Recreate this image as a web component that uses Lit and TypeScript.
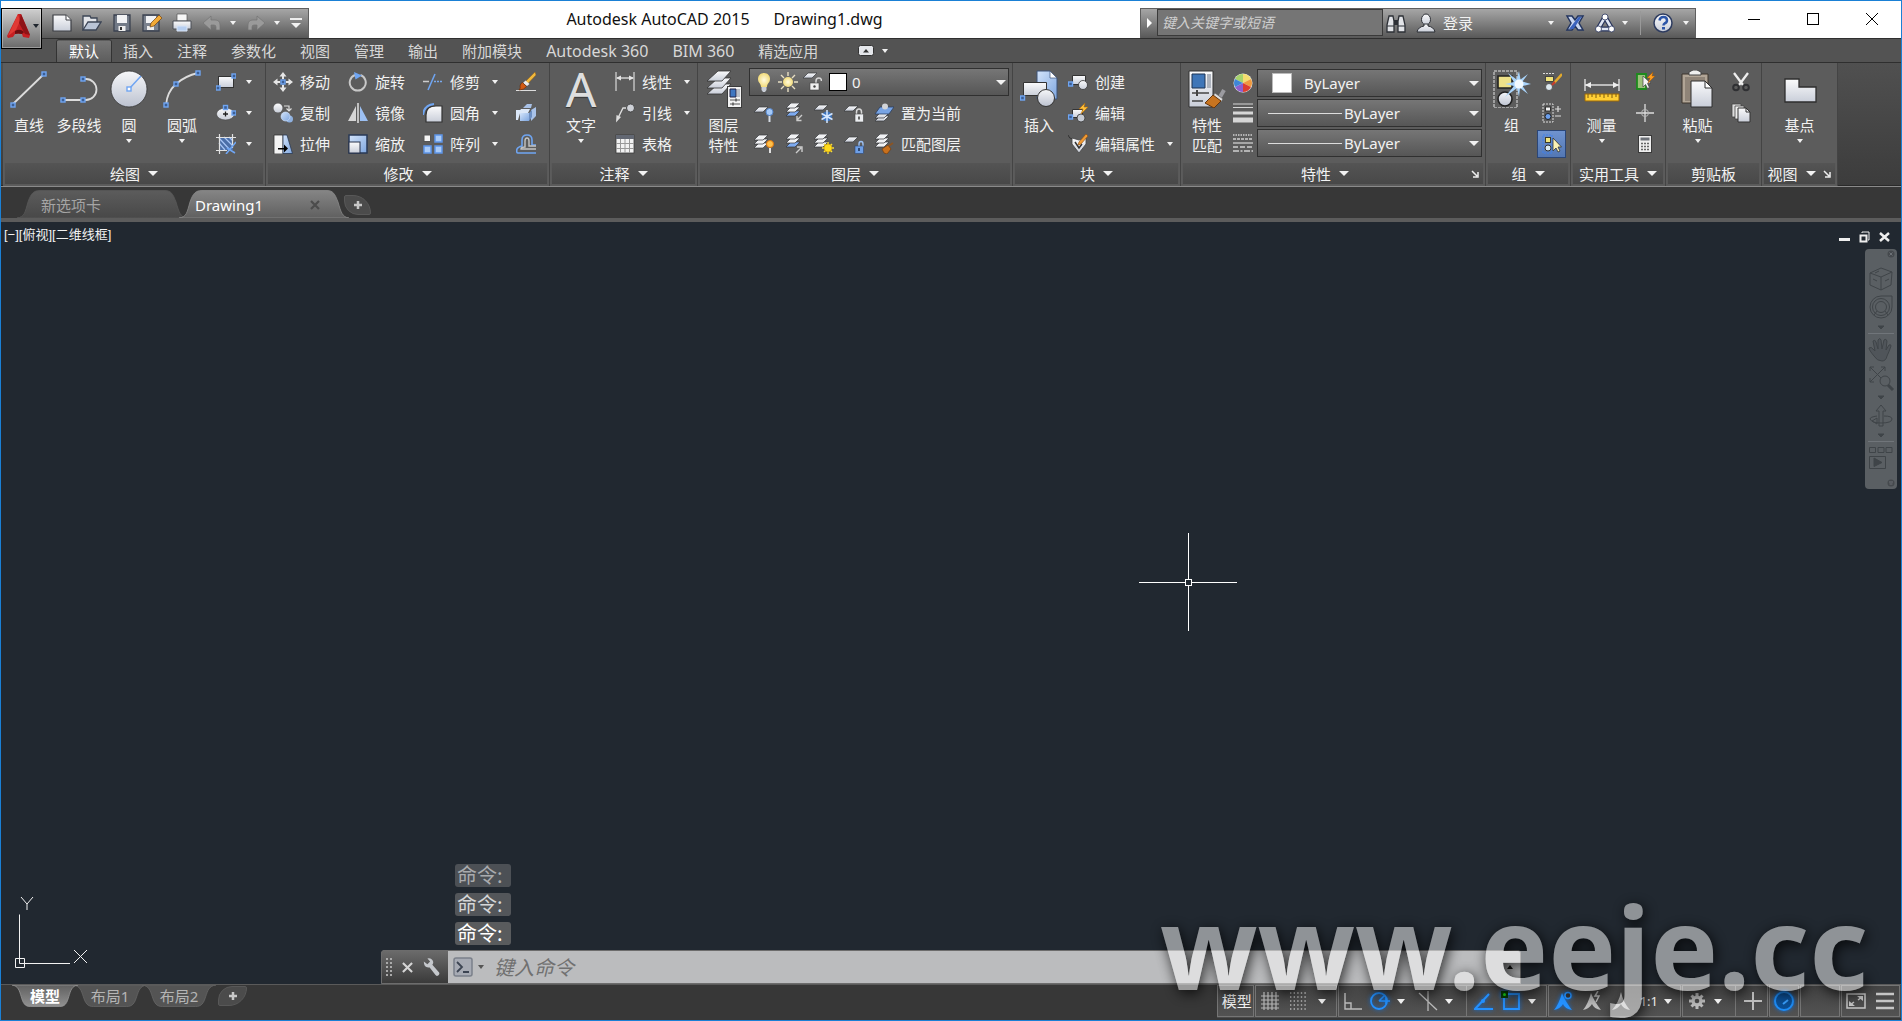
import { LitElement, html, svg, css, nothing } from "lit";
import { customElement, state } from "lit/decorators.js";
import { classMap } from "lit/directives/class-map.js";

const BLUE = "#6fa5f2";

/* A square grip, centred on (x, y). */
const grip = (x: number, y: number) =>
  svg`<rect x=${x - 2} y=${y - 2} width="4" height="4" fill="#3d5f94" stroke=${BLUE} stroke-width="1.4"/>`;

/* A single sheet of the layer stack, its top-left corner at (x, y). */
const sheet = (x: number, y: number, fill = "url(#paper)") =>
  svg`<path d="M${x + 5} ${y}H${x + 14}L${x + 9} ${y + 5}H${x}Z" fill=${fill} stroke="#33363b" stroke-width=".7"/>`;

const stack = (x: number, y: number, a = "#f1f2f4", b = "#f1f2f4", c = "#f1f2f4") =>
  svg`${sheet(x, y + 8, c)}${sheet(x, y + 4, b)}${sheet(x, y, a)}`;

const bigSheet = (y: number) =>
  svg`<path d="M13 ${y}H26L17 ${y + 10}H2Z" fill="url(#paper)" stroke="#333" stroke-width=".8"/>`;

const SMALL: Record<string, unknown> = {
  rect: svg`<rect x="2.5" y="4.5" width="15" height="11" fill="url(#paper)" stroke="#333"/>${grip(18, 4)}${grip(2, 16)}`,
  ellipse: svg`<ellipse cx="9.500" cy="11" rx="9" ry="6" fill="url(#paper)" stroke="#444" stroke-width=".6"/><path d="M9.500 8.500v5M7 11h5" stroke="#222" stroke-width="1.300"/>${grip(9.5, 4.5)}${grip(18, 10)}`,
  hatch: svg`<rect x="3" y="3" width="14" height="13" fill="#4b6fa8"/><path d="M3 9l6 7M3 4l11 12M8 3l9 9M13 3l4 4" stroke="#a8c6f5" stroke-width="1.200"/><path d="M3.500 0v20M16.500 0v14M0 3.500h20M0 16.500h11" stroke="#e2e2e2" stroke-width="1.200"/><path d="M20 8L10 20M11 14l8 5" stroke=${BLUE} stroke-width="1.600"/>`,
  move: svg`<path d="M10 0l3.500 4.500H11V7H9V4.500H6.500zM10 20l3.500-4.500H11V13H9v2.500H6.500zM0 10l4.500-3.500V9H7v2H4.500v2.500zM20 10l-4.500-3.500V9H13v2h2.500v2.500z" fill="#e6e6e6"/><rect x="8" y="8" width="4" height="4" fill="#3d5f94" stroke=${BLUE} stroke-width="1.400"/>`,
  copy: svg`<circle cx="5" cy="5" r="4.500" fill="url(#paper)"/><path d="M11 3h5v4M13.500 5.500L16 8l2.500-2.500" fill="none" stroke="#ddd" stroke-width="1.200"/><circle cx="16.500" cy="16" r="3.500" fill="#8fb1e0"/><circle cx="12.500" cy="13.500" r="4.500" fill="url(#sky)" stroke="#d4e4fb" stroke-width=".6"/>`,
  stretch: svg`<path d="M1 1h9v19H1z" fill="#f4f4f4" stroke="#333" stroke-width=".8"/><path d="M10 1h4l5.500 18.500H10z" fill="url(#sky)" stroke="#2a3850" stroke-width=".8"/><path d="M5 14h6v-3.500l4 4-4 4V15.500H5z" fill="#000"/>`,
  rotate: svg`<path d="M12.500 3A8 8 0 1 1 7 3" fill="none" stroke="#c8c8c8" stroke-width="2"/><path d="M6 0l8 3.500-6.500 4z" fill=${BLUE}/>`,
  mirror: svg`<path d="M8 3v15H0z" fill="#d6d6d6"/><path d="M12 3v15h8z" fill="#9cc0f3"/><path d="M10 0v20" stroke="#e2e2e2" stroke-width="1.500"/>`,
  scale: svg`<rect x="1" y="1" width="18" height="18" fill="url(#sky)" stroke="#293955" stroke-width="1.500"/><rect x="1" y="8" width="11" height="11" fill="url(#paper)" stroke="#29334a"/>`,
  trim: svg`<path d="M0 9.500h6" stroke="#ccc" stroke-width="1.500"/><path d="M5 18L12 2" stroke=${BLUE} stroke-width="1.500"/><path d="M11 9.500h9" stroke="#79a9ec" stroke-width="1.500" stroke-dasharray="2 1"/>`,
  fillet: svg`<path d="M3 19V12Q3 3 13 3h6v16z" fill="url(#paper)" stroke="#333" stroke-width="1.200"/><path d="M0 12Q1 2 11 1" fill="none" stroke=${BLUE} stroke-width="2"/>`,
  array: svg`<rect x="1" y="1" width="6.500" height="6.500" fill="#f4f4f4" stroke="#555"/><path d="M12 1h7v7h-7zM1 12h7v7H1zM12 12h7v7h-7z" fill="#a9cbf8" stroke="#5e95e8" stroke-width="1.500"/>`,
  erase: svg`<path d="M0 18.500h20" stroke="#ddd"/><path d="M19 0L9 10l2.500 2L20 3z" fill="#f0b83c" stroke="#96641a" stroke-width=".5"/><path d="M9.500 8.500l4 3.500-2.500 2-4-3z" fill="#e9e9e9"/><path d="M6.500 10.500l4 4Q8 18 3 18q2-2 1-4 .5-3 2.500-3.500z" fill="#d15a12" stroke="#632705" stroke-width=".6"/>`,
  box: svg`<path d="M7 5l4-4h5l-1 4zM15 7l5-3v9l-5 5z" fill="#a9c2e8"/><path d="M2 10l3-4h9l-2 4zM0 7h5l-3 10H0z" fill="#dbe7f8"/><path d="M4 10h9v8H4z" fill="url(#sky)"/><path d="M13 10l3-3v7l-3 4z" fill="#6d8fc2"/>`,
  offset: svg`<path d="M20 19H2Q0 19 1 15q1-2 5-3V6q0-5 5-5t5 5v5h4" fill="none" stroke=${BLUE} stroke-width="1.600"/><path d="M20 15H5q0-2 4-2V7q0-3 2-3t2 3v5h7" fill="none" stroke="#c4c4c4" stroke-width="1.400"/>`,
  linear: svg`<path d="M1 0v19M19 0v19M2 6h16" stroke="#cfcfcf" stroke-width="1.300"/><path d="M1 6l5-2.500v5zM19 6l-5-2.500v5z" fill="#e4e4e4"/>`,
  leader: svg`<circle cx="15.500" cy="5" r="4" fill="#cfd2d8" stroke="#333" stroke-width=".8"/><path d="M11 5H8L3 15" fill="none" stroke="#ddd" stroke-width="1.400"/><path d="M1 19.500L1.500 12 6 14z" fill="#ddd"/>`,
  table: svg`<rect x="1" y="1" width="18" height="18" fill="#f2f2f2" stroke="#3a3a3a" stroke-width=".8"/><path d="M1 1h18v4H1z" fill="#636873"/><path d="M1 9.500h18M1 14.500h18M5.500 5v14M10 5v14M14.500 5v14" stroke="#999"/>`,
  bulb: svg`<path d="M10 1c4 0 6 3 6 6 0 4-3 4-3 8H7c0-4-3-4-3-8 0-3 2-6 6-6z" fill="url(#bulb)"/><path d="M7.500 15h5v3l-1.500 2H9l-1.500-2z" fill="#c9ced6"/>`,
  sun: svg`<g stroke="#e8dfc4" stroke-width="1.400"><path d="M10 0v4M10 16v4M0 10h4M16 10h4M3 3l3 3M14 14l3 3M17 3l-3 3M6 14l-3 3"/></g><circle cx="10" cy="10" r="5" fill="url(#bulb)"/>`,
  unlock: svg`${sheet(1, 1)}<path d="M14 11V9q0-3 3-3 2.500 0 2.500 3" fill="none" stroke="#d8d8d8" stroke-width="1.500"/><rect x="8" y="11" width="9" height="7" fill="#f0f0f0" stroke="#444" stroke-width=".6"/><circle cx="12.500" cy="14.500" r="1.200" fill="#444"/>`,
  layOff: svg`${sheet(0, 4)}<circle cx="15.500" cy="9" r="3.500" fill="#a5c9f7" stroke="#5788ce"/><path d="M14.500 13h2v6h-2z" fill="#d5dbe4"/>`,
  layIso: svg`${stack(2, 0, "#f1f2f4", "#f1f2f4", "#7daaf0")}<path d="M18 12l-5 5m0-4v4.500h4.500" fill="none" stroke="#ccc" stroke-width="1.400"/>`,
  layFreeze: svg`${sheet(0, 2)}<circle cx="13" cy="13.500" r="5" fill="#3f75bd"/><g stroke="#d5e7ff" stroke-width="1.500"><path d="M13 7v13M7.500 10.500l11 6M18.500 10.500l-11 6"/></g>`,
  layLock: svg`${sheet(0, 3)}<path d="M12.500 12V9q0-3 2.500-3t2.500 3v3" fill="none" stroke="#d8d8d8" stroke-width="1.500"/><rect x="11" y="11" width="8.500" height="8" fill="#eceef1" stroke="#444" stroke-width=".6"/><path d="M15 13.500v3" stroke="#444" stroke-width="1.600"/>`,
  layCurrent: svg`${sheet(1, 13)}${sheet(1, 10)}<path d="M6 4h14l-5 7H1z" fill="#78a4e4" stroke="#2a3e60" stroke-width=".8"/><circle cx="11" cy="3.500" r="3" fill="#d2d4d8"/>`,
  layOn: svg`${stack(0, 1)}<circle cx="16" cy="10" r="3.500" fill="#ffc04a" stroke="#e0770b"/><path d="M15 14h2v5h-2z" fill="#e0e0e0"/>`,
  layUniso: svg`${stack(2, 0, "#f1f2f4", "#f1f2f4", "#7daaf0")}<path d="M12 19l5-5m-4-1h5v5" fill="none" stroke="#ccc" stroke-width="1.400"/>`,
  layThaw: svg`${stack(0, 0)}<g stroke="#f0dd45" stroke-width="1.500"><path d="M14 8v12M8 14h12M10 10l8 8M18 10l-8 8"/></g><circle cx="14" cy="14" r="4" fill="#ffdc1e" stroke="#c79300" stroke-width=".6"/>`,
  layUnlock: svg`${sheet(0, 3)}<path d="M15 13v-3q0-2.500 2-2.500t2 2.500v3" fill="none" stroke="#9cc0f3" stroke-width="1.400"/><rect x="11" y="12" width="8.500" height="7.500" fill="#6e9fe6" stroke="#2c4775" stroke-width=".6"/><path d="M15 14v3" stroke="#1d2f4f" stroke-width="1.500"/>`,
  layMatch: svg`${stack(1, 0)}<path d="M8 15l6-4 3 4-4 5-3-1z" fill="#c8701c" stroke="#6e3606" stroke-width=".6"/><path d="M14.500 12l4.500-3" stroke="#8a5424" stroke-width="2"/>`,
  blkCreate: svg`<path d="M4.500 3.500h13v9h-13z" fill="url(#paper)" stroke="#333"/><circle cx="15" cy="13" r="4.500" fill="url(#paper)" stroke="#333" stroke-width=".8"/>${grip(2.5, 12)}`,
  blkEdit: svg`<path d="M4.500 6.500h10v8h-10z" fill="url(#paper)" stroke="#333"/><circle cx="13" cy="15" r="4" fill="#c5cad3" stroke="#333" stroke-width=".8"/>${grip(2.5, 14)}<path d="M17 0l-6 6h4l-2 5 7-7h-4z" fill="#ffc23c" stroke="#b26a08" stroke-width=".6"/>`,
  blkAttr: svg`<path d="M0 1Q1 5 5 5" fill="none" stroke="#333"/><path d="M4 4l7 2 7-2v6l-7 9-7-9z" fill="url(#paper)" stroke="#444" stroke-width=".8"/><path d="M7 8l4 6 3-4" fill="none" stroke="#333" stroke-width="1.500"/><path d="M18 0l2 2-7 8-3 1 1-3z" fill="#ef9a35" stroke="#8f4e0c" stroke-width=".6"/>`,
  wheel: svg`<circle cx="10" cy="10" r="9.500" fill="#eee"/><path d="M10 10L2 6A9 9 0 0 1 10 1z" fill="#a6d36c"/><path d="M10 10V1a9 9 0 0 1 8 5z" fill="#f4dd6f"/><path d="M10 10l8-4a9 9 0 0 1 0 8z" fill="#f09a3e"/><path d="M10 10l8 4a9 9 0 0 1-8 5z" fill="#dc3e30"/><path d="M10 10v9a9 9 0 0 1-8-5z" fill="#8d5fd0"/><path d="M10 10l-8 4a9 9 0 0 1 0-8z" fill="#3f86d8"/>`,
  weights: svg`<path d="M0 1h20M0 4.500h20" stroke="#d6d6d6"/><path d="M0 10h20" stroke="#d6d6d6" stroke-width="3"/><path d="M0 17h20" stroke="#d6d6d6" stroke-width="5"/>`,
  types: svg`<g stroke="#d0d0d0" stroke-width="1.300"><path d="M0 2h20" stroke-dasharray="1.500 1"/><path d="M0 6h20" stroke-dasharray="3 1"/><path d="M0 10h20"/><path d="M0 14h20" stroke-dasharray="5 2"/><path d="M0 18h20" stroke-dasharray="6 1.500 2 1.500"/></g>`,
  grpEdit: svg`<path d="M1 1.500h12" stroke="#ddd" stroke-dasharray="2 1"/><rect x="3.500" y="4.500" width="8" height="5" fill="#efe27a" stroke="#444"/><circle cx="7" cy="15" r="3.500" fill="#dde8ef" stroke="#444" stroke-width=".8"/><path d="M20 2l-8 9" stroke="#e2a92c" stroke-width="2.500"/><path d="M13 10l-3 3" stroke="#c83a2c" stroke-width="2"/>`,
  grpUn: svg`<rect x="1" y="1" width="10" height="18" fill="none" stroke="#ddd" stroke-dasharray="2 1"/><rect x="3.500" y="4" width="5" height="4" fill="#f2f2f2" stroke="#333"/><circle cx="6" cy="13.500" r="3" fill="#6c9fec" stroke="#222"/><path d="M13 6h6M16 3v6M13 13h6" stroke="#ddd" stroke-width="1.200"/>`,
  grpSel: svg`<rect x="1" y="1" width="9" height="18" fill="none" stroke="#3f80ec" stroke-dasharray="2 1"/><rect x="3.500" y="3.500" width="5" height="5" fill="#f0e57f" stroke="#3a3a2a"/><circle cx="6" cy="14" r="3" fill="#d8e9f2" stroke="#333"/><path d="M11 4v13l3-3 2 4 2-1-2-4h3.500z" fill="#fbf3b5" stroke="#333" stroke-width=".8"/>`,
  quick: svg`<path d="M2 2h9v15H2z" fill="#9cc17a" stroke="#1d8a1d" stroke-width="1.800"/><path d="M8 4v11l2.500-2.500 2 4 2-1-2-4H16z" fill="#f4f4f4" stroke="#444" stroke-width=".7"/><path d="M18 0l-6 6h3l-2 5 7-7h-3z" fill="#ff9d1e" stroke="#9f5405" stroke-width=".5"/>`,
  point: svg`<path d="M10 1v18M1 10h18" stroke="#ddd" stroke-width="1.300"/><circle cx="10" cy="10" r="3.500" fill="none" stroke="#bbb"/>`,
  calc: svg`<rect x="3.500" y="1.500" width="13" height="17" fill="#eee" stroke="#3a3a3a"/><path d="M5.500 3.500h9v3h-9z" fill="#6c7077"/><path d="M6 9.500h9M6 12.500h9M6 15.500h9" stroke="#666" stroke-width="1.500" stroke-dasharray="2 1"/>`,
  cut: svg`<path d="M3 1l9 12M17 1L8 13" stroke="#eee" stroke-width="2.300"/><circle cx="5" cy="15.500" r="2.800" fill="none" stroke="#2f3033" stroke-width="2"/><circle cx="15" cy="15.500" r="2.800" fill="none" stroke="#2f3033" stroke-width="2"/>`,
  dup: svg`<path d="M1 1h9v13H1z" fill="#ddd" stroke="#444" stroke-width=".8"/><path d="M4 3h9v13H4z" fill="#eee" stroke="#444" stroke-width=".8"/><path d="M7 5h8l4 4v10H7z" fill="url(#paper)" stroke="#333"/><path d="M15 5v4h4" fill="none" stroke="#333"/>`,
  qNew: svg`<path d="M1 2h13l5 5v11H1z" fill="url(#paper)" stroke="#3c3f45" stroke-width="1.200"/><path d="M14 2v5h5" fill="#fff" stroke="#3c3f45"/>`,
  qOpen: svg`<path d="M1 17V3h7l1 2h6v4" fill="#e3e5e9" stroke="#3c4556" stroke-width="1.300"/><path d="M1 17l5-8h13l-5 8z" fill="#b9c4d6" stroke="#3c4556" stroke-width="1.300"/>`,
  qSave: svg`<path d="M2 2h16v16H2z" fill="#727a87" stroke="#3b4250" stroke-width="1.300"/><path d="M5 2h10v8H5z" fill="#f1f2f4"/><path d="M6.500 13h7v5h-7z" fill="#eee"/><path d="M8 14h2v3H8z" fill="#333"/>`,
  qSaveAs: svg`<path d="M1 2h16v16H1z" fill="#7b828e" stroke="#3b4250" stroke-width="1.300"/><path d="M4 3h10v7H4z" fill="#f1f2f4"/><path d="M5 13h7v4H5z" fill="#eee"/><path d="M17 2l3 3-8 8-4 1 1-4z" fill="#f2aa37" stroke="#704214" stroke-width=".7"/>`,
  qPrint: svg`<path d="M5 1h10v7H5z" fill="#f7f7f7" stroke="#555" stroke-width=".7"/><path d="M1 8h18v8H1z" fill="url(#paper)" stroke="#4a4e57"/><path d="M5 13h10v5H5z" fill="#b6cef0" stroke="#d9e4f5"/>`,
  undo: svg`<path d="M1 10l8-7v4h4q5 0 5 5v5h-4v-3q0-2-2-2H9v5z" fill="#9a9a9a" stroke="#747474" stroke-width=".7"/>`,
  redo: svg`<path d="M19 10l-8-7v4H7q-5 0-5 5v5h4v-3q0-2 2-2h3v5z" fill="#9a9a9a" stroke="#747474" stroke-width=".7"/>`,
  find: svg`<path d="M3 3h4l1 5v11H1v-7zM17 3h-4l-1 5v11h7v-7z" fill="#e2e4e8" stroke="#2d3036" stroke-width="1.300"/><path d="M8 7h4v5H8z" fill="#2d3036"/><path d="M1 13h7M12 13h7" stroke="#2d3036"/>`,
  user: svg`<ellipse cx="10" cy="6.500" rx="4.500" ry="5.500" fill="url(#paper)" stroke="#2d3036"/><path d="M8 11h4v2q6 1 7 6H1q1-5 7-6z" fill="url(#paper)" stroke="#2d3036"/>`,
  exchange: svg`<path d="M2 3h5l3 4 3-4h5l-4 7 4 7h-5l-3-4-3 4H2l4-7z" fill="#c9d6ef" stroke="#22345f" stroke-width="1.500"/><path d="M13.500 4h3L8.500 16H4z" fill="#3a62bd"/>`,
  a360: svg`<path d="M10 4l7 12H3z" fill="none" stroke="#29355c" stroke-width="5" stroke-linejoin="round"/><path d="M10 4l7 12H3z" fill="none" stroke="#dfe5f2" stroke-width="2.500" stroke-linejoin="round"/><g fill="#fff" stroke="#29355c" stroke-width=".8"><circle cx="10" cy="4" r="3"/><circle cx="3.500" cy="16" r="3"/><circle cx="16.500" cy="16" r="3"/></g>`,
  help: svg`<circle cx="10" cy="10" r="9" fill="url(#paper)" stroke="#2e3c60" stroke-width="1.500"/><path d="M6.500 7.500Q7 4 10.500 4T14 7.500q0 2-2.500 3-1 .5-1 2" fill="none" stroke="#2c55a8" stroke-width="2.500"/><path d="M9 14h3v2.500H9z" fill="#2c55a8"/>`,
  stGrid: svg`<path d="M4 1v18M8 1v18M12 1v18M16 1v18M1 5h18M1 9h18M1 13h18M1 17h18" stroke="#b5b5b5" stroke-width="1.200"/>`,
  stSnap: svg`<g stroke="#b5b5b5" stroke-width="1.400" stroke-dasharray="1.400 2.200"><path d="M1 2h18M1 6h18M1 10h18M1 14h18M1 18h18"/></g>`,
  stOrtho: svg`<path d="M2 2v16h17M2 12h6v6" fill="none" stroke="#bbb" stroke-width="1.400"/>`,
  stPolar: svg`<circle cx="9" cy="10" r="8" fill="none" stroke="#2491ff" stroke-width="1.800"/><path d="M9 10h11M9 10l6-6M16 7v6" fill="none" stroke="#2491ff" stroke-width="1.600"/>`,
  stIso: svg`<path d="M10 0v20M1 2l18 17" stroke="#bbb" stroke-width="1.300"/>`,
  stTrack: svg`<path d="M19 18H1L15 3" fill="none" stroke="#2491ff" stroke-width="2"/><circle cx="9" cy="10" r="2" fill="#2491ff"/>`,
  stOsnap: svg`<path d="M3 3h15v15H3z" fill="none" stroke="#2491ff" stroke-width="1.800"/><rect x="0" y="0" width="7" height="7" fill="#063a06"/><circle cx="3.500" cy="3.500" r="1.500" fill="#18d018"/>`,
  stAnno: svg`<path d="M9 2q3 8 10 17-7-1-9-6-3 5-9 6 5-6 8-17z" fill="#2491ff"/><circle cx="15" cy="4.500" r="3" fill="#333" stroke="#2491ff" stroke-width="1.500"/>`,
  stAuto: svg`<path d="M9 2q3 8 10 17-7-1-9-6-3 5-9 6 5-6 8-17z" fill="#bdbdbd"/><path d="M16 0l-3 5h4l-3 6" fill="none" stroke="#bdbdbd" stroke-width="1.500"/>`,
  stScale: svg`<path d="M10 1q2 10 9 18-7-1-9-6-3 5-9 6 7-8 9-18z" fill="#bdbdbd"/>`,
  stGear: svg`<g stroke="#bdbdbd" stroke-width="3"><path d="M10 2v16M2 10h16M4.500 4.500l11 11M15.500 4.500l-11 11"/></g><circle cx="10" cy="10" r="5.500" fill="#bdbdbd"/><circle cx="10" cy="10" r="2.300" fill="#4c4c4c"/>`,
  stPlus: svg`<path d="M10 1v18M1 10h18" stroke="#bdbdbd" stroke-width="2"/>`,
  stHw: svg`<circle cx="10" cy="10" r="9" fill="#0b4f96" stroke="#1e8cf5" stroke-width="2"/><path d="M9 13l5-4" stroke="#3aa0ff" stroke-width="2"/>`,
  stFull: svg`<path d="M1 3h18v14H1z" fill="none" stroke="#c5c5c5" stroke-width="1.500"/><path d="M11 5h6v5zM9 15H3v-5z" fill="#c5c5c5"/><path d="M16 6l-4 3M4 14l4-3" stroke="#c5c5c5" stroke-width="1.500"/>`,
  stMenu: svg`<path d="M1 3h18M1 10h18M1 17h18" stroke="#c5c5c5" stroke-width="2.300"/>`,
  wrench: svg`<path d="M2 4l4 3 3-3-3-3.500q5-1 6.500 4 0 2-1 3L19 16q1 2-1 3.500-2 1-3-.5L8.500 10.500Q2 11.500 2 4z" fill="#c5c8cc"/>`,
  prompt: svg`<rect x="1" y="1" width="18" height="18" rx="2" fill="#a7abb4" stroke="#7b808a" stroke-width="1.500"/><path d="M4 5l5 5-5 5M10 15h6" fill="none" stroke="#3c4452" stroke-width="1.800"/>`,
};

const LARGE: Record<string, unknown> = {
  line: svg`<path d="M3 34L34 4" stroke="#dcdcdc" stroke-width="1.800"/>${grip(3, 35)}${grip(34, 4)}`,
  pline: svg`<path d="M23 9h3a10 10 0 0 1 0 21H3" fill="none" stroke="#dcdcdc" stroke-width="1.800"/>${grip(23, 9)}${grip(23, 30)}${grip(3, 30)}`,
  circle: svg`<circle cx="19" cy="19" r="18" fill="url(#ball)" stroke="#333" stroke-width=".8"/><path d="M19 19L31 6" stroke=${BLUE} stroke-width="1.500"/><rect x="17" y="17" width="4" height="4" fill="#fff" stroke=${BLUE} stroke-width="1.400"/>`,
  arc: svg`<path d="M3 35Q4 22 13 14T35 3" fill="none" stroke="#dcdcdc" stroke-width="1.800"/>${grip(3, 35)}${grip(13, 14)}${grip(35, 3)}`,
  layers: svg`${bigSheet(14)}${bigSheet(8)}${bigSheet(1)}<rect x="22.500" y="16.500" width="14" height="21" fill="#f3f3f3" stroke="#3b3b3b"/><path d="M25 19h6v8h-6z" fill="#3f76c0" stroke="#224"/><path d="M32 19h3v8h-3z" fill="#bbc0c8"/><path d="M25 30h10M25 34h10" stroke="#555"/><path d="M31 28.500v3M28 32.500v3" stroke="#555" stroke-width="1.500"/>`,
  insert: svg`<path d="M17 1h13l7 7v21H17z" fill="url(#sky)" stroke="#3c5276"/><path d="M30 1v7h7z" fill="#fff" stroke="#3c5276" stroke-width=".7"/><path d="M3.500 12.500h23v13h-23z" fill="url(#paper)" stroke="#333"/><circle cx="26" cy="28" r="8.500" fill="url(#ball)" stroke="#333"/>${grip(2.5, 28)}`,
  match: svg`<path d="M1 1h24v36H1z" fill="url(#paper)" stroke="#333"/><path d="M4 4h13v14H4z" fill="#3f76b8" stroke="#1d3253"/><path d="M19 4h4v14h-4z" fill="#adb3bd"/><path d="M4 23h17M4 31h11" stroke="#444" stroke-width="1.600"/><path d="M9 20v6" stroke="#444" stroke-width="2"/><path d="M36 20l-4 7" stroke="#9b9ba0" stroke-width="4"/><path d="M27 23l8 6-2 3-8-6z" fill="#ddd" stroke="#555" stroke-width=".6"/><path d="M25 25l8 6-7 7-9-5z" fill="#c77420" stroke="#64340b"/>`,
  group: svg`<rect x="1" y="1" width="23" height="37" fill="none" stroke="#e2e2e2" stroke-dasharray="3 1"/><path d="M5 6h14v12H5z" fill="#eee189" stroke="#222" stroke-width="1.600"/><circle cx="12" cy="29" r="7" fill="url(#ball)" stroke="#222" stroke-width="1.600"/><path d="M26 1l1.500 8.500L35 4l-5.500 7.500L38 14l-8.500 2 5.500 8-8-6-1 9-2-9-12 9 9-11-9-2 9-2-6-9 8.500 6.500z" fill="#a9d4fb"/><circle cx="26" cy="14" r="4.500" fill="#f2faff"/>`,
  measure: svg`<path d="M2 9v12M36 9v12M2 15h34" stroke="#ddd" stroke-width="1.400"/><path d="M2 15l6-3v6zM36 15l-6-3v6z" fill="#eee"/><path d="M2 24h34v7H2z" fill="#ffcf35" stroke="#9c6809"/><path d="M5 24v4M9 24v3M13 24v4M17 24v3M21 24v4M25 24v3M29 24v4M33 24v3" stroke="#7c5a10"/>`,
  paste: svg`<path d="M3 4h26v29H3z" fill="#b1a596" stroke="#3c342c"/><path d="M6 7h20v24H6z" fill="#8f8478"/><path d="M10 5V2l4-2h4l4 2v3z" fill="#f0f0f0" stroke="#444"/><path d="M12 11h14l7 7v19H12z" fill="url(#paper)" stroke="#2e2e2e"/><path d="M26 11v7h7z" fill="#fff" stroke="#2e2e2e"/>`,
  base: svg`<path d="M4 9h14v8h17v15H4z" fill="url(#paper)" stroke="#2e2e2e" stroke-width="1.300"/>`,
};

const icon = (name: string) =>
  html`<svg class="ic" viewBox="0 0 20 20" aria-hidden="true">${SMALL[name]}</svg>`;
const bigIcon = (name: string) =>
  html`<svg class="big-ic" viewBox="0 0 38 38" aria-hidden="true">${LARGE[name]}</svg>`;
const caret = html`<i class="caret"></i>`;

type Tool = { icon: string; label?: string; name?: string; menu?: boolean; on?: boolean };

const small = (t: Tool) => html`<button
  class=${classMap({ small: true, on: !!t.on })}
  aria-label=${t.label ?? t.name ?? t.icon}
>${icon(t.icon)}${t.label ? html`<span>${t.label}</span>` : nothing}${t.menu ? caret : nothing}</button>`;

const large = (name: string, lines: string[], menu = false) => html`<button class="large">
  ${name === "text" ? html`<span class="glyph">A</span>` : bigIcon(name)}
  <span class="lbl">${lines.map((l) => html`<span>${l}</span>`)}</span>
  ${menu ? caret : nothing}
</button>`;

const col = (tools: Tool[]) => html`<div class="col">${tools.map(small)}</div>`;

const panel = (kind: string, title: string, body: unknown, menu = true, launcher = false) => html`
  <section class="panel ${kind}" aria-label=${title}>
    <div class="body">${body}</div>
    <div class="ptitle">
      <button class="pname">${title}${menu ? html`<i class="caret wide"></i>` : nothing}</button>
      ${launcher
        ? html`<button class="launch" aria-label="${title}设置"><svg viewBox="0 0 8 8"><path d="M1 1l5 5M7 2v5H2" fill="none" stroke="#eee" stroke-width="1.500"/></svg></button>`
        : nothing}
    </div>
  </section>`;

@customElement("app-root")
export class AppRoot extends LitElement {
  @state() private tab = "默认";
  @state() private layout = "模型";

  static styles = css`
    :host {
      display: block;
      font: 15px/20px "Noto Sans", "Noto Sans CJK SC", sans-serif;
      color: #f2f2f2;
    }
    * { box-sizing: border-box; }
    button, select, input { font: inherit; color: inherit; margin: 0; }
    button { background: none; border: 0; padding: 0; white-space: nowrap; }
    svg { display: block; flex: none; }
    .frame {
      position: relative;
      display: flex;
      flex-direction: column;
      min-height: 100vh;
      border: 1px solid #1a80d5;
      background: #373737;
      overflow: hidden;
    }
    .defs { position: absolute; }
    .ic { width: 20px; height: 20px; }
    .big-ic { width: 38px; height: 38px; }
    .caret {
      flex: none;
      width: 0; height: 0;
      border: 3px solid transparent;
      border-top: 4px solid #f2f2f2;
      border-bottom: 0;
    }
    .caret.wide { border-width: 5px 5px 0; }

    /* title bar */
    .titlebar { display: flex; height: 37px; background: #fff; color: #111; align-items: flex-end; }
    .appbtn {
      position: absolute; left: 0; top: 7px; z-index: 2;
      width: 41px; height: 41px;
      display: flex; align-items: center; gap: 2px; padding: 0 0 6px 4px;
      border: 1px solid #000;
      background: linear-gradient(#cfcfcf, #6a6a6a);
      box-shadow: inset 0 0 0 1px #ffffff55;
    }
    .appbtn svg { width: 25px; height: 30px; }
    .appbtn .caret { border-top-color: #20262e; }
    .qat, .info {
      display: flex; align-items: center;
      height: 30px; padding-bottom: 2px;
      background: linear-gradient(#a6a6a6, #585858);
      border: 1px solid #5f5f5f; border-width: 1px 1px 0 0;
    }
    .qat { margin-left: 41px; padding: 0 5px 2px 10px; gap: 10px; width: 267px; }
    .qat .step { display: flex; align-items: center; gap: 8px; }
    .custom { width: 12px; display: flex; flex-direction: column; align-items: center; gap: 3px; border-top: 2px solid #eee; padding-top: 3px; }
    .title { flex: 1; display: flex; justify-content: center; align-items: center; height: 37px; padding-bottom: 2px; gap: 24px; font-size: 16px; font-weight: 400; margin: 0; white-space: nowrap; }
    .info { border-left: 1px solid #5f5f5f; color: #f2f2f2; width: 556px; margin-right: 1px; }
    .info .fold { width: 16px; display: flex; justify-content: center; }
    .info .fold i { border: 5px solid transparent; border-left-color: #fff; border-right: 0; }
    .info input {
      width: 226px; height: 27px; padding: 0 4px;
      background: #757575; border: 1px solid #3a3a3a; font-size: 14px; border-radius: 0;
    }
    .info input::placeholder { color: #cfcfcf; font-style: italic; opacity: 1; }
    .info .acts { display: flex; align-items: center; flex: 1; gap: 10px; padding: 0 6px 0 3px; }
    .info .acts button { display: flex; align-items: center; gap: 7px; }
    .info .acts .login { flex: 1; }
    .info .login .caret { margin-left: auto; margin-right: 1px; }
    .info .acts .help { gap: 10px; }
    .info .bar { width: 1px; height: 24px; margin: 0 2px; background: #999; }
    .win { display: flex; align-self: stretch; margin-left: 27px; padding-bottom: 1px; }
    .win button { width: 59px; display: flex; align-items: center; justify-content: center; }
    .win svg { width: 14px; height: 14px; }

    /* ribbon tabs */
    .tabs {
      display: flex; align-items: flex-end;
      height: 25px; padding-left: 56px;
      background: #535353; border-top: 1px solid #2f2f2f; border-bottom: 1px solid #2f2f2f;
      color: #d8d8d8;
    }
    .tabs button { height: 22px; padding: 0 12px; line-height: 19px; border: 1px solid transparent; border-width: 1px 0 0; }
    .tabs button.latin { font-size: 16px; }
    .tabs button.sel {
      background: linear-gradient(#767676, #5d5d5d); color: #fff;
      box-shadow: -1px 0 #333, 1px 0 #333, 0 -1px #333; border-radius: 2px 2px 0 0;
    }
    .tabs .mini { display: flex; align-items: center; align-self: center; gap: 8px; margin-left: 28px; }
    .tabs .mini svg { width: 16px; height: 11px; }

    /* ribbon */
    .ribbon {
      display: flex; padding: 0 0 0 2px;
      background: linear-gradient(#505050, #3c3c3c);
      border-bottom: 1px solid #8a8a8a;
      box-shadow: inset 0 -1px #2a2a2a;
    }
    .panel { display: flex; flex-direction: column; border-right: 1px solid #444; background: #5c5c5c; }
    .panel .body { display: grid; padding: 3px 0; height: 100px; }
    .ptitle {
      display: flex; align-items: center; height: 22px; margin: 0 1px 1px;
      background: linear-gradient(#545454, #484848);
      border: 1px solid #5a5a5a; border-width: 0 1px 1px;
    }
    .pname { flex: 1; display: flex; justify-content: center; align-items: center; gap: 8px; }
    .launch { width: 16px; display: flex; justify-content: center; }
    .launch svg { width: 8px; height: 8px; }
    .large { display: flex; flex-direction: column; align-items: center; padding-top: 4px; }
    .large .lbl { display: flex; flex-direction: column; margin: 7px 0 4px; }
    .glyph { height: 38px; font-size: 48px; line-height: 38px; color: #dedede; text-shadow: 0 1px 1px #333; }
    .col { display: grid; grid-auto-rows: 31px; align-content: start; }
    .small { display: flex; align-items: center; gap: 7px; }
    .small .caret { margin-left: 5px; }
    .small.on { width: 29px; height: 28px; align-self: center; justify-content: center; background: linear-gradient(#6f93cf, #5377b3); border: 1px solid #2b4677; }
    .draw .body { grid-template-columns: 52px 48px 52px 54px 49px; padding-right: 7px; }
    .draw .col { padding-left: 7px; }
    .draw .small { gap: 5px; }
    .modify .body { grid-template-columns: 75px 75px 93px 33px; padding-left: 7px; }
    .annotate .body { grid-template-columns: 65px 82px; }
    .annotate .large { padding-right: 3px; }
    .layers .body { grid-template-columns: 51px 260px; padding-right: 3px; }
    .block .body { grid-template-columns: 55px 112px; }
    .block .large { padding-right: 3px; }
    .props .body { grid-template-columns: 52px 24px 225px; padding-right: 3px; }
    .group .body { grid-template-columns: 51px 33px; }
    .group .small:not(.on) { padding-left: 5px; }
    .utils .body { grid-template-columns: 61px 33px; }
    .utils .small { padding-left: 3px; }
    .clip .body { grid-template-columns: 63px 32px; }
    .clip .small { padding-left: 2px; }
    .view .body { grid-template-columns: 75px; }

    .pick {
      display: flex; align-items: center; position: relative;
      height: 28px; border: 1px solid #303030;
      background: linear-gradient(#767676, #565656);
    }
    .pick select {
      appearance: none; background: none; border: 0; border-radius: 0;
      position: absolute; inset: 0; width: 100%; height: 100%;
    }
    .pick .caret { margin-left: auto; margin-right: 2px; pointer-events: none; }
    .swatch { width: 20px; height: 20px; background: #fff; border: 1px solid #bbb; }
    .layerpick { margin-top: 2px; padding-left: 4px; gap: 4px; }
    .layerpick select { padding-left: 102px; }
    .layerpick .swatch { width: 18px; height: 18px; border-color: #000; margin-left: 3px; }
    .layerrows { display: grid; grid-template-rows: 31px 31px 31px; }
    .layerrow { display: grid; grid-template-columns: 30px 30px 30px 30px auto; }
    .layerrow .small { padding-left: 5px; }
    .picks { display: grid; grid-auto-rows: 28px; gap: 2px; padding-top: 3px; }
    .picks .swatch { margin-left: 14px; }
    .color select { padding-left: 46px; }
    .lined select { padding-left: 86px; }
    .lined .rule { width: 74px; height: 1px; margin-left: 10px; background: #ddd; }
    .typeicons { display: grid; grid-auto-rows: 30px; padding-top: 2px; align-items: center; }

    /* drawing tabs */
    .files { display: flex; align-items: flex-end; height: 35px; padding-left: 16px; border-bottom: 4px solid #5c5c5c; flex: none; }
    .ftab { position: relative; width: 170px; height: 28px; display: flex; align-items: center; padding: 2px 29px 0 24px; color: #a5a5a5; margin-right: -8px; }
    .ftab svg.shape, .ltab svg.shape { position: absolute; inset: 0; width: 100%; height: 100%; }
    .ftab span, .ltab span { position: relative; }
    .ftab.cur { color: #fff; padding-left: 16px; }
    .ftab .x { position: relative; margin-left: auto; width: 10px; height: 10px; }
    .add {
      display: flex; align-items: center; justify-content: center;
      width: 27px; height: 20px; background: #4b4b4b; border: 1px solid #585858;
    }
    .add svg { width: 10px; height: 10px; }
    .files .add { border-radius: 2px 18px 2px 14px; margin: 0 0 3px 3px; }

    /* canvas */
    .canvas { position: relative; flex: 1; min-height: 480px; background: #212830; }
    .vplabel { position: absolute; left: 3px; top: 4px; font: 13px/18px "Liberation Sans", "Noto Sans CJK SC", sans-serif; display: flex; }
    .docwin { position: absolute; right: 11px; top: 8px; display: flex; gap: 9px; }
    .docwin svg { width: 11px; height: 14px; }
    .nav { position: absolute; right: 4px; top: 27px; width: 32px; height: 240px; border-radius: 4px; background: #5a5f63; }
    .nav svg { width: 32px; height: 240px; }
    .cross { position: absolute; left: 62.5%; top: 47.3%; width: 98px; height: 98px; margin: -49px 0 0 -50px; }
    .ucs { position: absolute; left: 12px; bottom: 0; width: 80px; height: 92px; }
    .hist { position: absolute; left: 23.9%; bottom: 39px; display: grid; gap: 6px; margin: 0; padding: 0; list-style: none; }
    .hist li { height: 23px; width: 56px; padding: 0 2px; border-radius: 3px; background: #595b5d; font: 20px/21px "Noto Sans CJK SC", sans-serif; color: #fff; white-space: nowrap; }
    .hist li:nth-child(1) { color: #a9abae; background: #4c5055; }
    .hist li:nth-child(2) { color: #d5d6d8; background: #53565a; }
    .cmd {
      position: absolute; left: 20%; width: 60%; bottom: 0; height: 34px;
      display: flex; align-items: center;
      border: 1px solid #6c6c6c; border-radius: 3px 3px 0 0; background: #bbbcbe; color: #333;
    }
    .cmd .tools { display: flex; align-items: center; align-self: stretch; width: 66px; gap: 9px; padding-left: 3px; background: linear-gradient(#6b6b6b, #3a3a3a); }
    .grab { width: 8px; height: 20px; background: radial-gradient(circle, #aaa 1px, transparent 1px) 0 0 / 4px 4px; }
    .cmd .tools button { display: flex; }
    .cmd .tools svg { width: 18px; height: 18px; }
    .cmd .tools .x { width: 11px; height: 11px; }
    .cmd .hint { display: flex; align-items: center; gap: 5px; padding: 0 10px 0 5px; }
    .cmd .hint .caret { border-top-color: #555; }
    .cmd .up { transform: rotate(180deg); margin-right: 7px; border-top-color: #111; }
    .cmd input { flex: 1; min-width: 0; height: 100%; border: 0; background: none; padding: 0; font-size: 20px; outline: 0; }
    .cmd input::placeholder { color: #707070; font-style: italic; opacity: 1; }

    /* bottom strip */
    .bottom { display: flex; justify-content: space-between; height: 36px; border-top: 1px solid #5a5a5a; flex: none; }
    .layouts { display: flex; align-items: flex-start; padding-left: 11px; }
    .ltab { position: relative; height: 22px; width: 74px; margin-right: -5px; color: #b5b5b5; line-height: 20px; }
    .ltab:first-child { width: 66px; }
    .ltab.cur { color: #fff; font-weight: 700; z-index: 1; }
    .layouts .add { height: 20px; width: 29px; margin: 1px 0 0 7px; border-radius: 14px 2px 18px 2px; }
    .status { display: flex; height: 33px; padding: 0 1px 1px 0; gap: 1px; background: #4a4a4a; }
    .sgrp { display: flex; align-items: center; border: 1px solid #757575; background: linear-gradient(#444, #525252); padding: 0 4px; gap: 9px; }
    .sgrp.first { padding: 0 1px 0 4px; }
    .sgrp button { display: flex; align-items: center; }
    .sgrp .caret { border-width: 5px 4px 0; margin-right: 6px; }
    .sgrp .one .caret { margin: 0 4px 0 6px; }
    .sgrp .glow { filter: drop-shadow(0 0 2px #0a6fe0); }
    .sgrp .sep { width: 1px; align-self: stretch; background: #757575; }
    .sgrp.tight { gap: 7px; }
    .sgrp.blank { width: 40px; }
    .one { font-size: 13px; }

    .mark {
      position: absolute; right: 33px; bottom: 17px; z-index: 5; pointer-events: none;
      font: 700 114px/114px "Noto Sans", "Open Sans", sans-serif;
      color: #fff; filter: url(#halo); white-space: nowrap;
    }
  `;

  private tabsBar() {
    const names = ["默认", "插入", "注释", "参数化", "视图", "管理", "输出", "附加模块", "Autodesk 360", "BIM 360", "精选应用"];
    return html`<nav class="tabs">
      ${names.map((n) => html`<button class=${classMap({ sel: this.tab === n, latin: /^[A-Z]/.test(n) })} @click=${() => (this.tab = n)}>${n}</button>`)}
      <div class="mini">
        <svg viewBox="0 0 16 11"><rect x=".5" y=".5" width="15" height="10" rx="2" fill="#e4e6ea" stroke="#333"/><path d="M5 7.500L8 4l3 3.500z" fill="#333"/></svg>
        ${caret}
      </div>
    </nav>`;
  }

  private titleBar() {
    return html`<header class="titlebar">
      <button class="appbtn" aria-label="应用程序菜单">
        <svg viewBox="0 0 25 30"><path d="M12 3h3l9 21-1 3-6-1-1-3q-4-1-7 0l-2 3-5 1-1-2z" fill="#c51f22"/><path d="M12 3L2 25l8-6 4-9z" fill="#e03a34"/><path d="M15 3l9 21-5-1-6-11z" fill="#8f1316"/><path d="M9 20q5-3 9 1l-2 2q-4-1-7 0z" fill="#6e0d10"/></svg>
        ${caret}
      </button>
      <div class="qat">
        ${["qNew", "qOpen", "qSave", "qSaveAs", "qPrint"].map((n) => html`<button aria-label=${n}>${icon(n)}</button>`)}
        <button class="step" aria-label="放弃">${icon("undo")}${caret}</button>
        <button class="step" aria-label="重做">${icon("redo")}${caret}</button>
        <button class="custom" aria-label="自定义"><i class="caret wide"></i></button>
      </div>
      <h1 class="title"><span>Autodesk AutoCAD 2015</span><span>Drawing1.dwg</span></h1>
      <div class="info">
        <button class="fold" aria-label="折叠"><i></i></button>
        <input type="text" placeholder="键入关键字或短语" aria-label="搜索" />
        <div class="acts">
          <button aria-label="查找">${icon("find")}</button>
          <button class="login">${icon("user")}<span>登录</span>${caret}</button>
          <button aria-label="Exchange">${icon("exchange")}</button>
          <button aria-label="A360">${icon("a360")}${caret}</button>
          <i class="bar"></i>
          <button class="help" aria-label="帮助">${icon("help")}${caret}</button>
        </div>
      </div>
      <div class="win">
        <button aria-label="最小化"><svg viewBox="0 0 14 14"><path d="M1 7.500h12" stroke="#000"/></svg></button>
        <button aria-label="最大化"><svg viewBox="0 0 14 14"><rect x="1.500" y="1.500" width="11" height="11" fill="none" stroke="#000"/></svg></button>
        <button aria-label="关闭"><svg viewBox="0 0 14 14"><path d="M1 1l12 12M13 1L1 13" stroke="#000"/></svg></button>
      </div>
    </header>`;
  }

  private ribbon() {
    const lined = (label: string) => html`<div class="pick lined"><i class="rule"></i>
      <select aria-label=${label}><option>ByLayer</option></select><i class="caret wide"></i></div>`;
    return html`<div class="ribbon">
      ${panel("draw", "绘图", html`
        ${large("line", ["直线"])}${large("pline", ["多段线"])}${large("circle", ["圆"], true)}${large("arc", ["圆弧"], true)}
        ${col([{ icon: "rect", menu: true }, { icon: "ellipse", menu: true }, { icon: "hatch", menu: true }])}`)}
      ${panel("modify", "修改", html`
        ${col([{ icon: "move", label: "移动" }, { icon: "copy", label: "复制" }, { icon: "stretch", label: "拉伸" }])}
        ${col([{ icon: "rotate", label: "旋转" }, { icon: "mirror", label: "镜像" }, { icon: "scale", label: "缩放" }])}
        ${col([{ icon: "trim", label: "修剪", menu: true }, { icon: "fillet", label: "圆角", menu: true }, { icon: "array", label: "阵列", menu: true }])}
        ${col([{ icon: "erase" }, { icon: "box" }, { icon: "offset" }])}`)}
      ${panel("annotate", "注释", html`${large("text", ["文字"], true)}
        ${col([{ icon: "linear", label: "线性", menu: true }, { icon: "leader", label: "引线", menu: true }, { icon: "table", label: "表格" }])}`)}
      ${panel("layers", "图层", html`${large("layers", ["图层", "特性"])}
        <div class="layerrows">
          <div class="pick layerpick">${icon("bulb")}${icon("sun")}${icon("unlock")}<i class="swatch"></i>
            <select aria-label="图层"><option>0</option></select><i class="caret wide"></i></div>
          <div class="layerrow">${["layOff", "layIso", "layFreeze", "layLock"].map((n) => small({ icon: n }))}${small({ icon: "layCurrent", label: "置为当前" })}</div>
          <div class="layerrow">${["layOn", "layUniso", "layThaw", "layUnlock"].map((n) => small({ icon: n }))}${small({ icon: "layMatch", label: "匹配图层" })}</div>
        </div>`)}
      ${panel("block", "块", html`${large("insert", ["插入"])}
        ${col([{ icon: "blkCreate", label: "创建" }, { icon: "blkEdit", label: "编辑" }, { icon: "blkAttr", label: "编辑属性", menu: true }])}`)}
      ${panel("props", "特性", html`${large("match", ["特性", "匹配"])}
        <div class="typeicons">${icon("wheel")}${icon("weights")}${icon("types")}</div>
        <div class="picks">
          <div class="pick color"><i class="swatch"></i><select aria-label="颜色"><option>ByLayer</option></select><i class="caret wide"></i></div>
          ${lined("线宽")}${lined("线型")}
        </div>`, true, true)}
      ${panel("group", "组", html`${large("group", ["组"])}
        ${col([{ icon: "grpEdit" }, { icon: "grpUn" }, { icon: "grpSel", on: true }])}`)}
      ${panel("utils", "实用工具", html`${large("measure", ["测量"], true)}${col([{ icon: "quick" }, { icon: "point" }, { icon: "calc" }])}`)}
      ${panel("clip", "剪贴板", html`${large("paste", ["粘贴"], true)}${col([{ icon: "cut" }, { icon: "dup" }])}`, false)}
      ${panel("view", "视图", html`${large("base", ["基点"], true)}`, true, true)}
    </div>`;
  }

  private fileTab(name: string, cur: boolean) {
    return html`<button class=${classMap({ ftab: true, cur })}>
      <svg class="shape" viewBox="0 0 170 28" preserveAspectRatio="none">
        <path d="M0 28C8 27 8 22 11 12 14 3 17 .5 23 .5H148C154 .5 156 4 159 12 162 22 163 27 170 28Z" fill=${cur ? "url(#tabOn)" : "url(#tabOff)"} stroke=${cur ? "#8a8a8a" : "#585858"} stroke-width=".8"/>
      </svg>
      <span>${name}</span>
      ${cur ? html`<svg class="x" viewBox="0 0 10 10"><path d="M1 1l8 8M9 1L1 9" stroke="#4c4c4c" stroke-width="2.200"/></svg>` : nothing}
    </button>`;
  }

  private layoutTab(name: string) {
    const cur = this.layout === name;
    return html`<button class=${classMap({ ltab: true, cur })} @click=${() => (this.layout = name)}>
      <svg class="shape" viewBox="0 0 72 23" preserveAspectRatio="none">
        <path d="M0 0C7 1 8 6 10 12 12 19 14 22.500 20 22.500H52C58 22.500 60 19 62 12 64 6 65 1 72 0Z" fill=${cur ? "url(#layOn)" : "#545454"} stroke=${cur ? "#999" : "#666"} stroke-width=".8"/>
      </svg><span>${name}</span></button>`;
  }

  private plus() {
    return html`<button class="add" aria-label="新建"><svg viewBox="0 0 10 10"><path d="M5 1v8M1 5h8" stroke="#c8c8c8" stroke-width="2.500"/></svg></button>`;
  }

  private canvas() {
    return html`<main class="canvas">
      <div class="vplabel"><span>[−]</span><span>[俯视]</span><span>[二维线框]</span></div>
      <div class="docwin">
        <button aria-label="最小化"><svg viewBox="0 0 11 14"><path d="M0 8h11v3H0z" fill="#eee"/></svg></button>
        <button aria-label="还原"><svg viewBox="0 0 11 14"><path d="M3 3V2h7v8H9" fill="none" stroke="#eee"/><path d="M1.500 5.500h6v6h-6z" fill="none" stroke="#eee" stroke-width="2"/></svg></button>
        <button aria-label="关闭"><svg viewBox="0 0 11 14"><path d="M1 3l9 8M10 3l-9 8" stroke="#eee" stroke-width="2.500"/></svg></button>
      </div>
      <div class="nav">
        <svg viewBox="0 0 32 240" fill="none" stroke="#3f4448" stroke-width="1">
          <circle cx="26" cy="5" r="3.500" fill="#45494d" stroke="none"/><path d="M24.500 3.500l3 3M27.500 3.500l-3 3" stroke="#6c7176"/>
          <path d="M5 24l11-5 11 4-1 13-10 5-11-5zM5 24l11 4 11-5M16 28v13M10 24l4-2M8 30l4 2M20 32l4-2"/>
          <path d="M16 47h11v11a11 11 0 1 1-11-11z"/><circle cx="16" cy="58" r="5.500"/><circle cx="16" cy="58" r="8.500"/><path d="M9 66l3-4M23 66l-3-4"/>
          <path d="M13 77h6l-3 3z" fill="#3f4448"/><path d="M3 84.500h26" stroke="#70757a"/>
          <path d="M9 107q-5-6-5-8 2-2 5 2l1 1-2-10q2-2 3 1l2 7V91q2-3 3 0l1 9 2-9q2-2 3 1l-1 9 3-5q2-1 2 1-2 6-4 10-1 5-5 5-5 0-8-5z" fill="#50555a"/>
          <path d="M5 118l15 15M20 118L5 133M5 122v-4h4M16 118h4v4M5 129v4h4"/><circle cx="20" cy="132" r="5" fill="#5a5f63"/><path d="M23 136l5 5" stroke-width="3"/>
          <path d="M13 147h6l-3 3z" fill="#3f4448"/>
          <path d="M14 177v-15h-3l5-6 5 6h-3v15z"/><path d="M12 167q-7 1-7 3 2 4 11 4 11 0 11-4 0-3-8-3M7 172l5-3v6z"/>
          <path d="M13 185h6l-3 3z" fill="#3f4448"/><path d="M3 192.500h26" stroke="#70757a"/>
          <path d="M4.500 198.500h6v5h-6zM13 198.500h6v5h-6zM21 198.500h6v5h-6zM4.500 207.500h16v12h-16z"/><path d="M9 209l8 4.500-8 4z" fill="#3f4448"/>
          <circle cx="26" cy="234" r="3.500" fill="#45494d" stroke="none"/><path d="M24 233h4M24.500 235h3" stroke="#6c7176"/>
        </svg>
      </div>
      <svg class="cross" viewBox="0 0 98 98"><path d="M0 49.500h46M52 49.500h46M49.500 0v46M49.500 52v46" stroke="#fff"/><rect x="46.500" y="46.500" width="6" height="6" fill="none" stroke="#fff"/></svg>
      <svg class="ucs" viewBox="0 -12 80 92" fill="none" stroke="#f2f2f2" stroke-width="1">
        <path d="M6.500 10.500V59.500H57"/><path d="M2.500 54.500h9v9h-9z"/>
        <path d="M8-7l6 7v6M20-7l-6 7"/>
        <path d="M61 46l13 13M74 46L61 59"/>
      </svg>
      <ul class="hist"><li>命令:</li><li>命令:</li><li>命令:</li></ul>
      <div class="cmd">
        <div class="tools">
          <i class="grab"></i>
          <button aria-label="关闭"><svg class="x" viewBox="0 0 12 12"><path d="M1 1l10 10M11 1L1 11" stroke="#d5d5d5" stroke-width="2.300"/></svg></button>
          <button aria-label="自定义">${icon("wrench")}</button>
        </div>
        <button class="hint" aria-label="最近使用的命令">${icon("prompt")}${caret}</button>
        <input type="text" placeholder="键入命令" aria-label="命令行" />
        <i class="caret up"></i>
      </div>
    </main>`;
  }

  private statusBar() {
    const b = (n: string, glow = false) => html`<button class=${classMap({ glow })} aria-label=${n}>${icon(n)}</button>`;
    return html`<div class="status">
      <div class="sgrp first"><button>模型</button></div>
      <div class="sgrp">${b("stGrid")}${b("stSnap")}${caret}</div>
      <div class="sgrp tight">${b("stOrtho")}${b("stPolar", true)}${caret}${b("stIso")}${caret}<i class="sep"></i>${b("stTrack", true)}${b("stOsnap", true)}${caret}</div>
      <div class="sgrp">${b("stAnno", true)}${b("stAuto")}${b("stScale")}<button class="one">1:1${caret}</button></div>
      <div class="sgrp tight">${b("stGear")}${caret}<i class="sep"></i>${b("stPlus")}</div>
      <div class="sgrp">${b("stHw", true)}</div>
      <div class="sgrp blank"></div>
      <div class="sgrp">${b("stFull")}${b("stMenu")}</div>
    </div>`;
  }

  render() {
    return html`<div class="frame">
      <svg class="defs" width="0" height="0" aria-hidden="true">
        <defs>
          <linearGradient id="paper" x1="0" y1="0" x2="0" y2="1"><stop offset="0" stop-color="#fbfbfc"/><stop offset="1" stop-color="#c9ced9"/></linearGradient>
          <linearGradient id="ball" x1="0" y1="0" x2="0" y2="1"><stop offset="0" stop-color="#f6f7f9"/><stop offset="1" stop-color="#bcc2d0"/></linearGradient>
          <linearGradient id="sky" x1="0" y1="0" x2="1" y2="1"><stop offset="0" stop-color="#d3e4fb"/><stop offset="1" stop-color="#7ea6df"/></linearGradient>
          <radialGradient id="bulb"><stop offset="0" stop-color="#fffbe0"/><stop offset="1" stop-color="#f3dc7c"/></radialGradient>
          <linearGradient id="tabOn" x1="0" y1="0" x2="0" y2="1"><stop offset="0" stop-color="#858585"/><stop offset="1" stop-color="#606060"/></linearGradient>
          <linearGradient id="tabOff" x1="0" y1="0" x2="0" y2="1"><stop offset="0" stop-color="#5c5c5c"/><stop offset="1" stop-color="#484848"/></linearGradient>
          <linearGradient id="layOn" x1="0" y1="0" x2="0" y2="1"><stop offset="0" stop-color="#606060"/><stop offset="1" stop-color="#919191"/></linearGradient>
          <!-- Half-transparent lettering whose shadow falls only outside the letters -->
          <filter id="halo" x="-5%" y="-20%" width="110%" height="140%" color-interpolation-filters="sRGB">
            <feGaussianBlur in="SourceAlpha" stdDeviation="7" result="blur"/>
            <feOffset in="blur" dx="2" dy="3" result="cast"/>
            <feComponentTransfer in="cast" result="dim"><feFuncA type="linear" slope="0.8"/></feComponentTransfer>
            <feComposite in="dim" in2="SourceAlpha" operator="out" result="outer"/>
            <feComponentTransfer in="SourceGraphic" result="face"><feFuncA type="linear" slope="0.5"/></feComponentTransfer>
            <feMerge><feMergeNode in="outer"/><feMergeNode in="face"/></feMerge>
          </filter>
        </defs>
      </svg>
      ${this.titleBar()}${this.tabsBar()}${this.ribbon()}
      <div class="files">${this.fileTab("新选项卡", false)}${this.fileTab("Drawing1", true)}${this.plus()}</div>
      ${this.canvas()}
      <footer class="bottom">
        <div class="layouts">${["模型", "布局1", "布局2"].map((n) => this.layoutTab(n))}${this.plus()}</div>
        ${this.statusBar()}
      </footer>
      <div class="mark">www.eeje.cc</div>
    </div>`;
  }
}
